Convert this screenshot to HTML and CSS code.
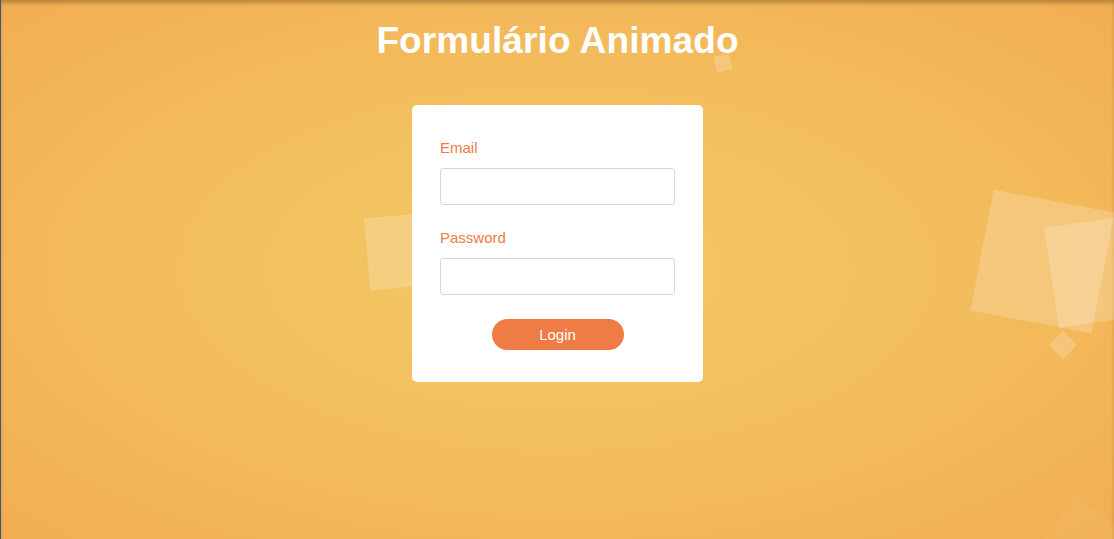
FILE: index.html
```html
<!DOCTYPE html>
<html lang="pt">
<head>
<meta charset="utf-8">
<title>Formulário Animado</title>
<link rel="stylesheet" href="styles.css">
</head>
<body>
<div class="wrapper">
  <ul class="bg-bubbles">
    <li class="sq sq-title"></li>
    <li class="sq sq-left"></li>
    <li class="sq sq-big"></li>
    <li class="sq sq-tall"></li>
    <li class="sq sq-diamond"></li>
    <li class="sq sq-bottom"></li>
  </ul>
  <div class="container">
    <h1 class="title">Formulário Animado</h1>
    <form class="card">
      <label class="label" for="email">Email</label>
      <input class="field" id="email" type="text">
      <label class="label label-second" for="pass">Password</label>
      <input class="field" id="pass" type="password">
      <button class="btn" type="button">Login</button>
    </form>
  </div>
</div>
</body>
</html>
```
FILE: styles.css
```css
* { box-sizing: border-box; }
html, body { margin: 0; padding: 0; height: 100%; }
body {
  font-family: "Liberation Sans", Arial, sans-serif;
  overflow: hidden;
}
.wrapper {
  position: relative;
  width: 100%;
  height: 539px;
  background: radial-gradient(ellipse at center, #f3c763 0%, #f3c060 40%, #f2ae52 100%);
  border-left: 1px solid #3e5878;
  box-shadow: inset 0 4px 4px -1px rgba(80, 50, 10, 0.35);
  overflow: hidden;
}
.bg-bubbles {
  position: absolute;
  top: 0; left: 0;
  width: 100%; height: 100%;
  margin: 0; padding: 0;
  list-style: none;
  z-index: 0;
}
.sq {
  position: absolute;
  display: block;
  background: rgba(255, 255, 255, 0.2);
}
.sq-title { width: 16px; height: 16px; left: 714px; top: 55px; transform: rotate(-14deg); }
.sq-left { width: 76px; height: 72px; left: 366px; top: 215px; transform: rotate(-5deg); }
.sq-big { width: 123px; height: 123px; left: 980px; top: 200px; transform: rotate(10.8deg); }
.sq-tall { width: 101px; height: 101px; left: 1050px; top: 220px; transform: rotate(-8.5deg); }
.sq-diamond { width: 20px; height: 20px; left: 1052px; top: 335px; transform: rotate(45deg); }
.sq-bottom { width: 90px; height: 90px; left: 1040px; top: 513px; transform: rotate(35deg); background: rgba(255, 255, 255, 0.04); }

.container {
  position: relative;
  z-index: 1;
  display: flex;
  flex-direction: column;
  align-items: center;
  padding-top: 20px;
}
.title {
  margin: 0;
  font-size: 37px;
  line-height: 41px;
  font-weight: 700;
  letter-spacing: 0.1px;
  color: #ffffff;
}
.card {
  margin-top: 44px;
  width: 291px;
  background: #ffffff;
  border-radius: 5px;
  padding: 34px 28px 32px;
  display: flex;
  flex-direction: column;
}
.label {
  font-size: 15px;
  line-height: 18px;
  color: #ef7b45;
}
.label-second { margin-top: 24px; }
.field {
  margin-top: 11px;
  width: 235px;
  height: 37px;
  border: 1px solid #c9dcee;
  border-radius: 3px;
  background: #ffffff;
  font-family: inherit;
  font-size: 15px;
  padding: 0 10px;
  outline: none;
}
.btn {
  margin-top: 24px;
  align-self: center;
  width: 132px;
  height: 31px;
  border: none;
  border-radius: 16px;
  background: #ef7b45;
  color: #ffffff;
  font-family: inherit;
  font-size: 15px;
  cursor: pointer;
}
```
